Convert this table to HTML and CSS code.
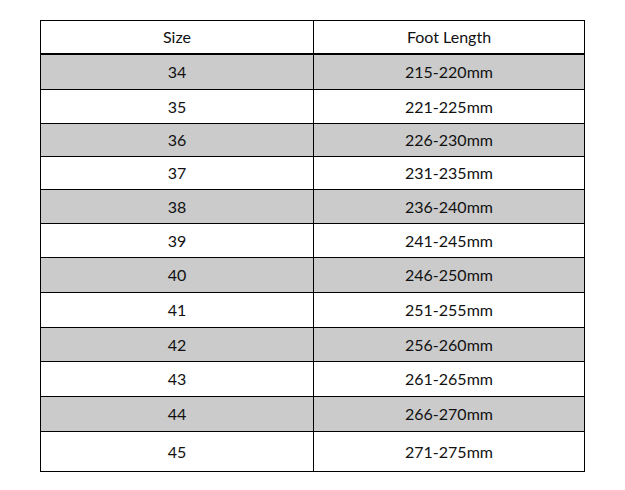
FILE: index.html
```html
<!DOCTYPE html>
<html>
<head>
<meta charset="utf-8">
<link rel="stylesheet" href="styles.css">
</head>
<body>
<table class="sizes">
  <thead>
    <tr><th>Size</th><th>Foot Length</th></tr>
  </thead>
  <tbody>
    <tr class="h35 alt"><td>34</td><td>215-220mm</td></tr>
    <tr class="h34"><td>35</td><td>221-225mm</td></tr>
    <tr class="h33 alt"><td>36</td><td>226-230mm</td></tr>
    <tr class="h33"><td>37</td><td>231-235mm</td></tr>
    <tr class="h34 alt"><td>38</td><td>236-240mm</td></tr>
    <tr class="h34"><td>39</td><td>241-245mm</td></tr>
    <tr class="h35 alt"><td>40</td><td>246-250mm</td></tr>
    <tr class="h35"><td>41</td><td>251-255mm</td></tr>
    <tr class="h34 alt"><td>42</td><td>256-260mm</td></tr>
    <tr class="h35"><td>43</td><td>261-265mm</td></tr>
    <tr class="h35 alt"><td>44</td><td>266-270mm</td></tr>
    <tr class="h40"><td>45</td><td>271-275mm</td></tr>
  </tbody>
</table>
</body>
</html>
```
FILE: styles.css
```css
html, body {
  margin: 0;
  padding: 0;
  background: #ffffff;
}
body {
  padding: 20px 0 0 40px;
  font-family: Lato, "Open Sans", "Liberation Sans", sans-serif;
  font-size: 16px;
  color: #111111;
}
.sizes {
  border-collapse: collapse;
  width: 545px;
  table-layout: fixed;
}
.sizes th, .sizes td {
  border: 1px solid #000;
  text-align: center;
  vertical-align: middle;
  padding: 0;
  font-weight: normal;
  line-height: 18px;
}
.sizes th:first-child, .sizes td:first-child {
  width: 272px;
}
.sizes thead th {
  height: 32px;
  border-bottom: 2px solid #000;
}
.sizes .alt td {
  background: #cbcbcb;
}
.h33 td { height: 32px; }
.h34 td { height: 33px; }
.h35 td { height: 34px; }
.h40 td { height: 39px; }
```
